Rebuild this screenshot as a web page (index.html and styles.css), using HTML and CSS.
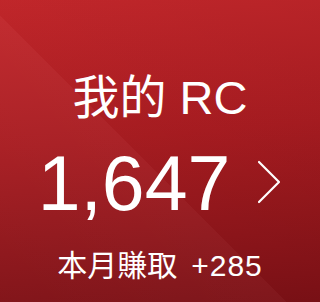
FILE: index.html
```html
<!DOCTYPE html>
<html lang="zh-Hant">
<head>
    <meta charset="UTF-8">
    <meta name="viewport" content="width=device-width, initial-scale=1.0">
    <title>我的 RC</title>
    <link rel="stylesheet" href="styles.css">
</head>
<body>
    <div class="card">
        <div class="shine"></div>
        <h1 class="title">我的 RC</h1>
        <a class="points" href="#">
            <span class="amount">1,647</span>
            <svg class="chevron" width="26" height="44" viewBox="0 0 26 44">
                <path d="M3 2 L23 22 L3 42" fill="none" stroke="#fff" stroke-width="2.2" stroke-linecap="round" stroke-linejoin="round"/>
            </svg>
        </a>
        <p class="earned">本月賺取<span class="plus">+285</span></p>
    </div>
</body>
</html>
```

FILE: styles.css
```css
body{
    margin:0;
    font-family: "Liberation Sans", "Noto Sans CJK TC", sans-serif;
}

.card{
    position:relative;
    overflow:hidden;
    width:320px;
    height:302px;
    box-sizing:border-box;
    padding-top:70px;
    background: linear-gradient(175deg, #c3272b 0%, #a81c21 45%, #7a1015 100%);
    color:#fff;
    text-align:center;
}

/* faint diagonal band, lighter on the lower left */
.shine{
    position:absolute;
    inset:0;
    background: linear-gradient(45deg, rgba(255,255,255,0.015) 0%, rgba(255,255,255,0.03) 46%, rgba(0,0,0,0.015) 46%, rgba(0,0,0,0.03) 100%);
}

.title{
    position:relative;
    margin:0;
    font-size:47px;
    font-weight:normal;
    line-height:56px;
}

.points{
    position:relative;
    display:flex;
    align-items:center;
    justify-content:center;
    gap:26px;
    height:82px;
    margin-top:16px;
    color:#fff;
    text-decoration:none;
}

.amount{
    font-size:77px;
    line-height:82px;
}

.chevron{
    margin-top:-2px;
}

.earned{
    position:relative;
    margin:24px 0 0;
    font-size:30px;
    line-height:36px;
}

.plus{
    margin-left:14px;
    letter-spacing:1px;
}
```
